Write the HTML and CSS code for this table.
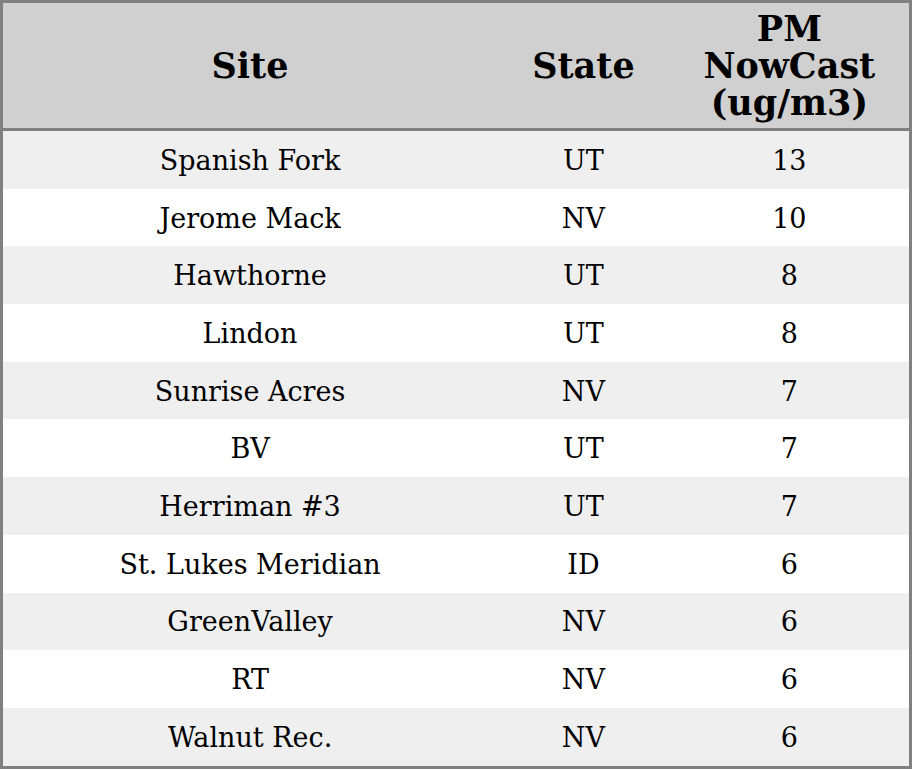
FILE: index.html
```html
<!DOCTYPE html>
<html>
<head>
<meta charset="utf-8">
<link rel="stylesheet" href="styles.css">
</head>
<body>
<table class="aq">
  <colgroup>
    <col class="c-site">
    <col class="c-state">
    <col class="c-pm">
  </colgroup>
  <thead>
    <tr><th>Site</th><th>State</th><th>PM<br>NowCast<br>(ug/m3)</th></tr>
  </thead>
  <tbody>
    <tr><td>Spanish Fork</td><td>UT</td><td>13</td></tr>
    <tr><td>Jerome Mack</td><td>NV</td><td>10</td></tr>
    <tr><td>Hawthorne</td><td>UT</td><td>8</td></tr>
    <tr><td>Lindon</td><td>UT</td><td>8</td></tr>
    <tr><td>Sunrise Acres</td><td>NV</td><td>7</td></tr>
    <tr><td>BV</td><td>UT</td><td>7</td></tr>
    <tr><td>Herriman #3</td><td>UT</td><td>7</td></tr>
    <tr><td>St. Lukes Meridian</td><td>ID</td><td>6</td></tr>
    <tr><td>GreenValley</td><td>NV</td><td>6</td></tr>
    <tr><td>RT</td><td>NV</td><td>6</td></tr>
    <tr><td>Walnut Rec.</td><td>NV</td><td>6</td></tr>
  </tbody>
</table>
</body>
</html>
```

FILE: styles.css
```css
html, body {
  margin: 0;
  padding: 0;
  background: #ffffff;
}
body {
  font-family: "DejaVu Serif", serif;
  color: #000;
}
.aq {
  width: 912px;
  border-collapse: collapse;
  border: 3px solid #808080;
  table-layout: fixed;
}
.c-site { width: 494px; }
.c-state { width: 172px; }
.c-pm { width: 240px; }
.aq th {
  background: #d0d0d0;
  font-size: 35px;
  font-weight: bold;
  line-height: 37px;
  height: 125px;
  padding: 0;
  text-align: center;
  vertical-align: middle;
  border-bottom: 3px solid #808080;
}
.aq td {
  font-size: 27px;
  line-height: 30px;
  height: 55.7px;
  padding: 2px 0 0;
  text-align: center;
  vertical-align: middle;
}
.aq tbody tr:nth-child(odd) td { background: #efefef; }
.aq tbody tr:nth-child(even) td { background: #ffffff; }
```
